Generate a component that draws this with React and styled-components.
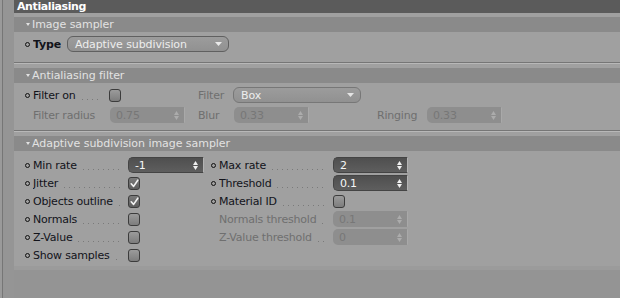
import React from "react";
import styled, { createGlobalStyle, css } from "styled-components";

const GlobalStyle = createGlobalStyle`
  html, body { margin: 0; padding: 0; }
  body {
    background: #949494;
    font-family: "DejaVu Sans", "Lucida Grande", sans-serif;
    font-size: 11px;
  }
`;

const Page = styled.div`
  display: flex;
  width: 620px;
  height: 298px;
  overflow: hidden;
  background: #949494;
`;

const Gutter = styled.div`
  flex: none;
  width: 14px;
  background: linear-gradient(to right, #9a9a9a 0 2px, #767676 2px 3px, #959595 3px);
`;

const Main = styled.div`
  flex: 1;
  display: flex;
  flex-direction: column;
`;

const Panel = styled.div`
  background: #a0a0a0;
  border-bottom: 4px solid #9b9b9b;
`;

const TitleBar = styled.div`
  height: 13px;
  line-height: 13px;
  background: #5b5b5b;
  color: #ffffff;
  font-weight: bold;
  padding-left: 3px;
  letter-spacing: -0.4px;
`;

const Section = styled.section`
  padding-top: 4px;
  ${(p) =>
    p.$divided &&
    css`
      padding-top: 5px;
      border-top: 1px solid #767676;
      box-shadow: inset 0 1px 0 #b8b8b8;
    `}
`;

const SectionHeader = styled.div`
  display: flex;
  align-items: center;
  height: 15px;
  background: #8a8a8a;
  color: #e2e2e2;
  padding-left: 12px;
  letter-spacing: -0.05px;
  white-space: nowrap;
`;

const Disclosure = styled.span`
  width: 0;
  height: 0;
  border-left: 2.5px solid transparent;
  border-right: 2.5px solid transparent;
  border-top: 3px solid #e2e2e2;
  margin-right: 2px;
`;

const Body = styled.div`
  padding: ${(p) => p.$pt}px 0 ${(p) => p.$pb}px 11px;
`;

const Grid = styled.div`
  display: grid;
  grid-template-columns: ${(p) => p.$cols};
  grid-auto-rows: 18px;
  row-gap: ${(p) => p.$gap || 0}px;
`;

const Field = styled.div`
  display: flex;
  align-items: center;
  height: 18px;
  letter-spacing: -0.2px;
`;

const Marker = styled.span`
  flex: none;
  box-sizing: border-box;
  width: 5px;
  height: 5px;
  border: 1px solid #111;
  border-radius: 50%;
  margin-right: 3px;
  visibility: ${(p) => (p.$hidden ? "hidden" : "visible")};
`;

const Label = styled.span`
  flex: none;
  display: flex;
  align-items: center;
  ${(p) => p.$w && css`width: ${p.$w}px;`}
  margin-right: ${(p) => p.$mr || 0}px;
  color: ${(p) => (p.$disabled ? "#6f6f6f" : "#12131a")};
  font-weight: ${(p) => (p.$bold ? "bold" : "normal")};
  white-space: nowrap;
  overflow: hidden;
`;

const Leader = styled.span`
  flex: 1;
  min-width: 0;
  height: 1px;
  margin: 8px 8px 0 6px;
  background: repeating-linear-gradient(to right, #7a7a7a 0 1px, transparent 1px 5px);
`;

const Dropdown = styled.div`
  flex: none;
  box-sizing: border-box;
  width: ${(p) => p.$w}px;
  height: 16px;
  border: 1px solid ${(p) => (p.$soft ? "#777" : "#606060")};
  border-radius: 6px;
  background: linear-gradient(#9c9c9c, #919191);
  color: #ededed;
  display: flex;
  align-items: center;
  justify-content: space-between;
  padding: 0 6px 0 7px;
  letter-spacing: -0.1px;
`;

const Spin = styled.div`
  flex: none;
  box-sizing: border-box;
  width: ${(p) => p.$w || 75}px;
  height: 16px;
  border-radius: 5px 1px 1px 5px;
  display: flex;
  align-items: center;
  justify-content: space-between;
  padding: 0 5px 0 6px;
  ${(p) =>
    p.$disabled
      ? css`
          background: #8e8e8e;
          color: #777777;
          border-right: 1px solid #a9a9a9;
        `
      : css`
          background: linear-gradient(#4f4f4f, #5e5e5e);
          color: #f6f6f6;
          border: 1px solid #444;
          border-right-color: #b4b4b4;
        `}
`;

const Check = styled.span`
  flex: none;
  box-sizing: border-box;
  width: 12px;
  height: 13px;
  border: 1px solid #3c3c3c;
  border-radius: 3px;
  display: flex;
  align-items: center;
  justify-content: center;
  background: ${(p) =>
    p.$checked ? "linear-gradient(#7a7a7a, #5d5d5d)" : "linear-gradient(#9b9b9b, #7d7d7d)"};
`;

const ArrowDown = ({ color = "#eaeaea" }) => (
  <svg width="7" height="4" viewBox="0 0 7 4">
    <path d="M0 0 H7 L3.5 4 Z" fill={color} />
  </svg>
);

const SpinArrows = ({ color }) => (
  <svg width="5" height="9" viewBox="0 0 5 9">
    <path d="M0 4 L2.5 0 L5 4 Z M0 5 L5 5 L2.5 9 Z" fill={color} />
  </svg>
);

const CheckMark = () => (
  <svg width="9" height="9" viewBox="0 0 9 9">
    <path d="M1.2 4.8 L3.6 7.4 L7.8 1.2" fill="none" stroke="#f2f2f2" strokeWidth="1.6" strokeLinecap="round" strokeLinejoin="round" />
  </svg>
);

const SpinBox = ({ value, disabled, w }) => (
  <Spin $disabled={disabled} $w={w}>
    <span>{value}</span>
    <SpinArrows color={disabled ? "#acacac" : "#f0f0f0"} />
  </Spin>
);

const Row = ({ label, w, marker = true, hideMarker, dots = true, disabled, children }) => (
  <Field>
    {marker && <Marker $hidden={hideMarker} />}
    <Label $w={w} $disabled={disabled}>
      {label}
      {dots && <Leader />}
    </Label>
    {children}
  </Field>
);

export default function App() {
  return (
    <>
      <GlobalStyle />
      <Page>
        <Gutter />
        <Main>
          <Panel>
            <TitleBar>Antialiasing</TitleBar>

            <Section>
              <SectionHeader>
                <Disclosure />
                Image sampler
              </SectionHeader>
              <Body $pt={3} $pb={9}>
                <Field>
                  <Marker />
                  <Label $bold $mr={6}>Type</Label>
                  <Dropdown $w={162}>
                    <span>Adaptive subdivision</span>
                    <ArrowDown />
                  </Dropdown>
                </Field>
              </Body>
            </Section>

            <Section $divided>
              <SectionHeader>
                <Disclosure />
                Antialiasing filter
              </SectionHeader>
              <Body $pt={3} $pb={6}>
                <Grid $cols="173px 179px 1fr" $gap={2}>
                  <Row label="Filter on" w={76}>
                    <Check />
                  </Row>
                  <Row label="Filter" w={35} marker={false} dots={false} disabled>
                    <Dropdown $w={128} $soft>
                      <span>Box</span>
                      <ArrowDown color="#e4e4e4" />
                    </Dropdown>
                  </Row>
                  <span />
                  <Row label="Filter radius" w={77} hideMarker dots={false} disabled>
                    <SpinBox value="0.75" disabled />
                  </Row>
                  <Row label="Blur" w={36} marker={false} dots={false} disabled>
                    <SpinBox value="0.33" disabled />
                  </Row>
                  <Row label="Ringing" w={50} marker={false} dots={false} disabled>
                    <SpinBox value="0.33" disabled />
                  </Row>
                </Grid>
              </Body>
            </Section>

            <Section $divided>
              <SectionHeader>
                <Disclosure />
                Adaptive subdivision image sampler
              </SectionHeader>
              <Body $pt={5} $pb={2}>
                <Grid $cols="186px 1fr">
                  <Row label="Min rate" w={95}>
                    <SpinBox value="-1" w={76} />
                  </Row>
                  <Row label="Max rate" w={114}>
                    <SpinBox value="2" />
                  </Row>
                  <Row label="Jitter" w={95}>
                    <Check $checked><CheckMark /></Check>
                  </Row>
                  <Row label="Threshold" w={114}>
                    <SpinBox value="0.1" />
                  </Row>
                  <Row label="Objects outline" w={95}>
                    <Check $checked><CheckMark /></Check>
                  </Row>
                  <Row label="Material ID" w={114}>
                    <Check />
                  </Row>
                  <Row label="Normals" w={95}>
                    <Check />
                  </Row>
                  <Row label="Normals threshold" w={114} hideMarker disabled>
                    <SpinBox value="0.1" disabled />
                  </Row>
                  <Row label="Z-Value" w={95}>
                    <Check />
                  </Row>
                  <Row label="Z-Value threshold" w={114} hideMarker disabled>
                    <SpinBox value="0" disabled />
                  </Row>
                  <Row label="Show samples" w={95}>
                    <Check />
                  </Row>
                </Grid>
              </Body>
            </Section>
          </Panel>
        </Main>
      </Page>
    </>
  );
}
